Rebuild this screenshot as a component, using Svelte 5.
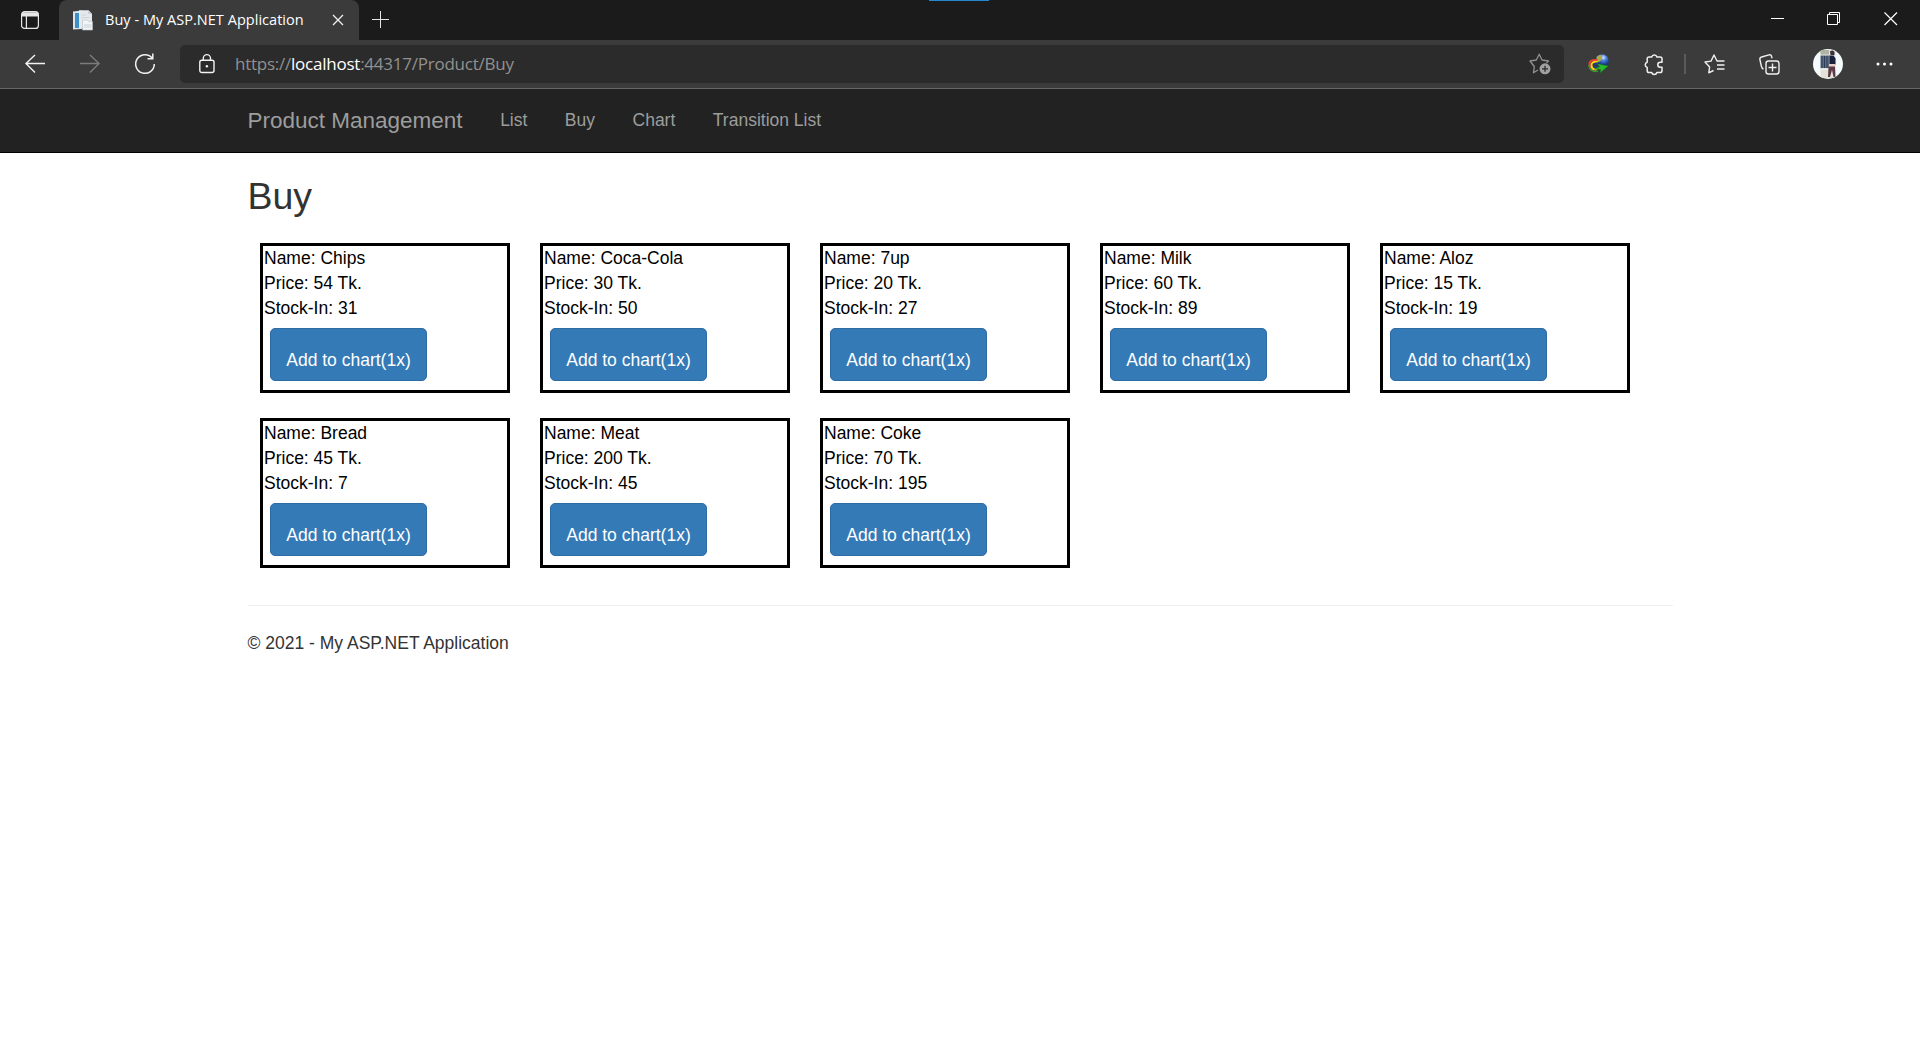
<script>
  const links = ['List', 'Buy', 'Chart', 'Transition List'];
  const products = [
    { name: 'Chips', price: 54, stock: 31 },
    { name: 'Coca-Cola', price: 30, stock: 50 },
    { name: '7up', price: 20, stock: 27 },
    { name: 'Milk', price: 60, stock: 89 },
    { name: 'Aloz', price: 15, stock: 19 },
    { name: 'Bread', price: 45, stock: 7 },
    { name: 'Meat', price: 200, stock: 45 },
    { name: 'Coke', price: 70, stock: 195 }
  ];
</script>

<div class="window">
  <div class="tabstrip">
    <div class="workspace">
      <svg width="18" height="18" viewBox="0 0 18 18" fill="none" stroke="#e6e6e6" stroke-width="1.2">
        <rect x=".6" y=".6" width="16.8" height="16.8" rx="3" />
        <path d="M1 3h16M1 2h16M1 4.6h16" stroke-width="1.6" />
        <path d="M5.4 5v12" />
      </svg>
    </div>
    <div class="tab">
      <svg class="favicon" width="20" height="20" viewBox="0 0 20 20">
        <path d="M0 1.5 9 .5V19L0 19.5z" fill="#d9e6ee" />
        <path d="M2 3h4v15H2z" fill="#3f8fc6" />
        <path d="M6 .3h9.500l3.500 3.500V18H6z" fill="#e4e9ee" />
        <path d="M15.500.3v3.500h3.500z" fill="#b9c2ca" />
        <path d="M8.500 5h5M8.500 7.500h8" stroke="#cdd5dc" />
        <path d="M9.500 10h5l1 1.500h4V20h-10z" fill="#f3f4f5" stroke="#b8c1c8" stroke-width=".6" />
        <path d="M11 14h7.500v4H11z" fill="#dde2e6" />
      </svg>
      <span class="title">Buy - My ASP.NET Application</span>
      <svg class="close" width="10" height="10" viewBox="0 0 10 10" stroke="#f0f0f0" stroke-width="1.3"><path d="M0 0l10 10M10 0L0 10" /></svg>
    </div>
    <svg class="plus" width="17" height="17" viewBox="0 0 17 17" stroke="#e6e6e6" stroke-width="1"><path d="M8.500 0v17M0 8.500h17" /></svg>
    <div class="accent"></div>
    <div class="controls">
      <svg width="13" height="14" viewBox="0 0 13 14" stroke="#fff"><path d="M0 6.500h13" /></svg>
      <svg width="14" height="14" viewBox="0 0 14 14" fill="none" stroke="#fff"><path d="M.5 2.500h10v10H.5zM2.500 2.500V.5h10v10h-2" /></svg>
      <svg width="14" height="14" viewBox="0 0 14 14" stroke="#fff" stroke-width="1.200"><path d="M.5.5l12.500 12.500M13 .5L.5 13" /></svg>
    </div>
  </div>

  <div class="toolbar">
    <svg class="back" width="20" height="20" viewBox="0 0 20 20" fill="none" stroke="#f2f2f2" stroke-width="1.4"><path d="M20 9.500H1M10 1L1 9.500l9 9" /></svg>
    <svg class="forward" width="20" height="20" viewBox="0 0 20 20" fill="none" stroke="#7c7c7c" stroke-width="1.4"><path d="M0 9.500h19M10 1l9 8.500-9 9" /></svg>
    <svg class="reload" width="22" height="22" viewBox="0 0 22 22" fill="none" stroke="#f2f2f2" stroke-width="1.5"><path d="M18.500 5.500A9.300 9.300 0 1 0 20.300 11M18.800.5v5.300h-5.300" /></svg>
    <div class="address">
      <svg class="lock" width="16" height="20" viewBox="0 0 16 20" fill="none" stroke="#f2f2f2" stroke-width="1.4">
        <rect x=".8" y="6.200" width="14.200" height="12.300" rx="2" />
        <path d="M4.300 6.200V4.200a3.600 3.600 0 0 1 7.200 0v2" />
        <circle cx="7.900" cy="12.200" r="1.200" fill="#f2f2f2" stroke="none" />
      </svg>
      <span class="url">https://<b>localhost</b>:44317/Product/Buy</span>
      <svg class="addstar" width="22" height="22" viewBox="0 0 22 22" fill="none" stroke="#919191" stroke-width="1.300" stroke-linejoin="round">
        <path d="M9 17l-4.500 2.800.8-6.300L1 8l6.300-1L10.200 1.200 13 7l6.500 1-2 2" />
        <circle cx="16" cy="15.800" r="5.500" fill="#a0a0a0" stroke="none" />
        <path d="M16 12.800v6M13 15.800h6" stroke="#2b2b2b" />
      </svg>
    </div>
    <svg class="idm" width="22" height="20" viewBox="0 0 22 20">
      <defs>
        <radialGradient id="globe" cx=".6" cy=".25"><stop offset="0" stop-color="#d6e6ff" /><stop offset=".45" stop-color="#4b82db" /><stop offset="1" stop-color="#173b8c" /></radialGradient>
      </defs>
      <circle cx="14" cy="7" r="6.800" fill="url(#globe)" />
      <path d="M8.500 3C12-.5 15 1 14 4s-3 5-5.500 4z" fill="#a9a84d" />
      <g fill="none">
        <path d="M9.500 6.200C4 5 1 7.500 1.500 11.500S5 17 8 16.500" stroke="#e9402a" stroke-width="2" />
        <path d="M9.500 8C5.500 7 3 9 3.500 12s2.500 3.500 5.500 3" stroke="#f5d21f" stroke-width="2" />
        <path d="M10 9.500C7 9 5.500 10 6 12s2 2 4 1.500" stroke="#243a8c" stroke-width="1.500" />
        <path d="M1 11c.2 5 4 7.500 9 6" stroke="#2b9b34" stroke-width="1.500" />
      </g>
      <path d="M9 9.500l11.500 2.500-8.500 7 .5-3.500-6-.5 5-2.500z" fill="#27ba2b" stroke="#145f18" stroke-width=".5" />
    </svg>
    <svg class="puzzle" width="20" height="21" viewBox="0 0 20 21" fill="none" stroke="#efefef" stroke-width="1.500" stroke-linejoin="round">
      <path d="M4.500 3h3.200a2.700 2.700 0 0 1 5.200 0h3.300q1.800 0 1.800 1.800v3.400h-1.700a2.500 2.500 0 0 0 0 5H18v3.500q0 1.800-1.800 1.800h-3.300a2.700 2.700 0 0 1-5.200 0H5q-1.800 0-1.800-1.800v-3.300a2.700 2.700 0 0 1 0-5.200V4.800Q3.200 3 5 3" />
    </svg>
    <div class="divider"></div>
    <svg class="favs" width="21" height="20" viewBox="0 0 21 20" fill="none" stroke="#efefef" stroke-width="1.400" stroke-linejoin="round">
      <path d="M9.500 16.500l-4.700 2.300.8-5.800L1 8l6-.9L10 1l3 6h7.500M13 11h7.500M13 15h7.500" />
    </svg>
    <svg class="collections" width="21" height="21" viewBox="0 0 21 21" fill="none" stroke="#efefef" stroke-width="1.400">
      <rect x="7" y="7" width="13" height="13" rx="2.500" />
      <path d="M13.500 9.500v8M9.500 13.500h8M4.500 15C2.800 14.500 2.600 13.500 2.300 12L.9 5.500Q.6 3.500 2.600 3L10 .9q2-.5 2.500 1.400l.6 2" />
    </svg>
    <svg class="avatar" width="30" height="30" viewBox="0 0 30 30">
      <defs><clipPath id="round"><circle cx="15" cy="15" r="15" /></clipPath></defs>
      <g clip-path="url(#round)">
        <path d="M0 0h30v30H0z" fill="#f4fafb" />
        <path d="M7.500 1h15v28h-15z" fill="#e5e2da" />
        <path d="M7.500 1h8.500v4.500H7.500z" fill="#aeb3a4" />
        <path d="M7.500 6.500h9v13h-9z" fill="#5b6c84" />
        <path d="M9 7v12M11.500 7v12M14 7v12" stroke="#2e3d57" stroke-width="1" />
        <path d="M7.500 20h9" stroke="#f3f3ee" stroke-width="1.500" />
        <path d="M17 2.500q2.500-2 4.500.5v3h-4z" fill="#39303c" />
        <path d="M16.500 6.500h4l2 3v6h-6z" fill="#17213b" />
        <path d="M16 15h6v3h-6z" fill="#e6cfc3" />
        <path d="M15.500 17.500h6.500l.5 10.500h-2l-1.500-7-2 7h-2z" fill="#5a3b46" />
      </g>
    </svg>
    <svg class="more" width="17" height="4" viewBox="0 0 17 4" fill="#fff"><circle cx="2" cy="2" r="1.500" /><circle cx="8.500" cy="2" r="1.500" /><circle cx="15" cy="2" r="1.500" /></svg>
  </div>

  <nav class="navbar">
    <div class="container navrow">
      <a class="brand" href="#home">Product Management</a>
      {#each links as link}
        <a href="#nav">{link}</a>
      {/each}
    </div>
  </nav>

  <main class="container">
    <h2>Buy</h2>
    <div class="products">
      {#each products as p}
        <article class="card">
          <div>Name: {p.name}</div>
          <div>Price: {p.price} Tk.</div>
          <div>Stock-In: {p.stock}</div>
          <button class="buy">Add to chart(1x)</button>
        </article>
      {/each}
    </div>
    <hr />
    <footer>© 2021 - My ASP.NET Application</footer>
  </main>
</div>

<style>
  :global(body) { margin: 0; background: #fff; }
  .window { height: 1041px; overflow: hidden; font: 17.5px/25px "Liberation Sans", Arial, sans-serif; color: #333; }
  svg { display: block; flex: none; overflow: visible; }

  .tabstrip { position: relative; display: flex; height: 40px; background: #1b1b1b; }
  .workspace { box-sizing: border-box; width: 59px; padding: 11px 0 0 21px; }
  .tab { display: flex; align-items: center; box-sizing: border-box; width: 300px; height: 40px; padding-left: 14px; background: #3b3b3b; border-radius: 8px 8px 0 0; }
  .title { width: 199px; margin-left: 12px; font: 14.5px/20px "Open Sans", "Noto Sans", sans-serif; letter-spacing: 0.03px; color: #fff; white-space: nowrap; }
  .close { margin-left: 29px; }
  .plus { margin: 11px 0 0 13px; }
  .accent { position: absolute; top: 0; left: 929px; width: 60px; height: 1px; background: #2487cd; }
  .controls { display: flex; gap: 43px; margin: 12px 22px 0 auto; }

  .toolbar { display: flex; align-items: center; box-sizing: border-box; height: 49px; background: #3b3b3b; border-bottom: 1px solid #666; }
  .back { margin-left: 25px; }
  .forward { margin-left: 35px; }
  .reload { margin-left: 34px; }
  .address { display: flex; align-items: center; box-sizing: border-box; width: 1384px; height: 38px; margin-left: 24px; padding: 0 13px 0 19px; border-radius: 5px; background: #2b2b2b; }
  .url { margin: 0 auto 1px 20px; font: 17px/24px "Open Sans", "Noto Sans", sans-serif; letter-spacing: -0.24px; color: #919191; white-space: nowrap; }
  .url b { font-weight: 400; color: #fff; }
  .idm { margin-left: 24px; }
  .puzzle { margin-left: 34px; }
  .divider { width: 2px; height: 20px; margin-left: 20px; background: #5a5a5a; }
  .favs { margin-left: 18px; }
  .collections { margin-left: 34px; }
  .avatar { margin-left: 33px; }
  .more { margin-left: 33px; }

  .navbar { height: 63px; background: #222; border-bottom: 1px solid #000; }
  .container { box-sizing: border-box; width: 1462.5px; margin: 0 auto; padding: 0 18.75px; }
  .navrow { display: flex; }
  .navrow a { color: #9d9d9d; text-decoration: none; white-space: nowrap; line-height: 25px; padding: 18.75px; }
  .navrow .brand { padding-left: 0; font-size: 22.5px; }

  h2 { margin: 23px 0 0; font-size: 37.5px; line-height: 41px; font-weight: 500; }
  .products { display: grid; grid-template-columns: repeat(5, 250px); gap: 25px 30px; padding: 26px 0 0 12.5px; color: #000; }
  .card { box-sizing: border-box; height: 150px; border: 3px solid #000; padding-left: 1px; }
  .buy { display: block; box-sizing: border-box; width: 157px; height: 53px; margin: 7px 0 0 6px; padding: 12px 0 0; border: 1px solid #2e6da4; border-radius: 5px; background: #337ab7; color: #fff; font: inherit; text-align: center; white-space: nowrap; }
  hr { margin: 37px 0 24.5px; border: 0; border-top: 1px solid #eee; }
</style>
